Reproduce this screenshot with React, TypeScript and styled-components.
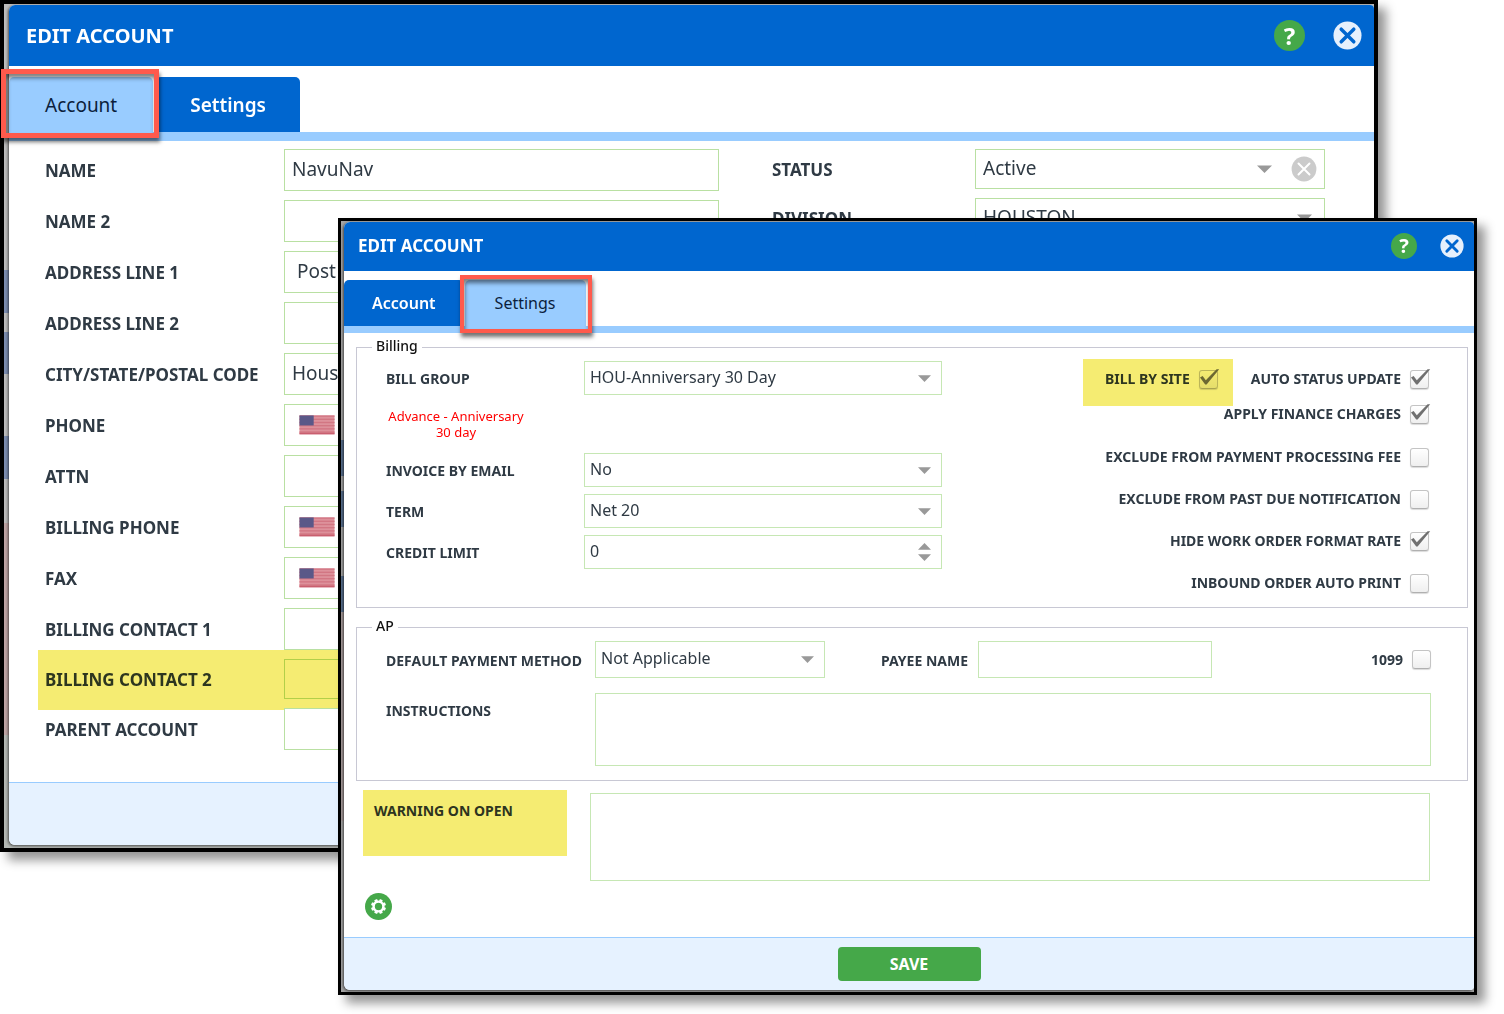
import React, { useState } from "react";
import styled, { createGlobalStyle, css } from "styled-components";

const color = {
  blue: "#0066cf",
  sky: "#99ccff",
  footer: "#e6f2ff",
  green: "#45a849",
  text: "#2f3a44",
  field: "#b9e0a2",
  fieldSoft: "#c6e7b4",
  group: "#c8c8d4",
  marker: "#f5ec72",
  callout: "#ff5a4c",
  grey: "#999999",
};

type Size = "large" | "small";

const GlobalStyle = createGlobalStyle`
  *, *::before, *::after { box-sizing: border-box; }
  body {
    margin: 0;
    background: #fff;
    color: ${color.text};
    font-family: "Noto Sans", "Open Sans", sans-serif;
  }
  button, input, select, textarea { font: inherit; color: inherit; margin: 0; }
`;

/* ---------- windows ---------- */

const Stage = styled.main`
  display: grid;
  align-items: start;
  min-height: 100vh;
  overflow: hidden;
`;

const Frame = styled.section<{ $size: Size }>`
  grid-area: 1 / 1;
  border: 4px solid #000;
  box-shadow: 8px 8px 10px rgba(0, 0, 0, 0.42);
  ${({ $size }) =>
    $size === "large"
      ? css`
          margin-right: 126px;
          padding: 1px 0 3px 5px;
          background: linear-gradient(
            #bdbdbd 266px, #7c8db0 266px 309px, #bdbdbd 309px 328px,
            #7c8db0 328px 370px, #bdbdbd 370px 432px, #7c8db0 432px 475px,
            #bdbdbd 475px 519px, #bfa5a5 519px 731px, #b4b8b4 731px
          );
        `
      : css`
          z-index: 1;
          margin: 218px 27px 0 338px;
          border-width: 3px;
          padding: 1px 0 2px 3px;
          background: linear-gradient(
            #a5a5a5 219px, #5a7290 219px 255px, #a5a5a5 255px 270px,
            #5a7290 270px 306px, #a5a5a5 306px 355px, #5a7290 355px 391px,
            #a89c9c 391px 600px, #a5a5a5 600px
          );
        `}
`;

const Dialog = styled.div`
  border-radius: 6px 4px 4px 6px;
  background: #fff;
  box-shadow: -1px 1px 3px rgba(0, 0, 0, 0.6);
`;

const Header = styled.header<{ $size: Size }>`
  display: flex;
  align-items: center;
  border-radius: 6px 4px 0 0;
  background: ${color.blue};
  color: #fff;
  ${({ $size }) =>
    $size === "large"
      ? css`height: 61px; padding: 0 12px 0 17px; gap: 28px;`
      : css`height: 49px; padding: 0 10px 2px 14px; gap: 23px;`}
`;

const Title = styled.h1<{ $size: Size }>`
  flex: 1;
  margin: 0;
  font-size: ${({ $size }) => ($size === "large" ? 20 : 17)}px;
  line-height: 24px;
  font-weight: 700;
`;

const IconButton = styled.button<{ $d: number }>`
  display: block;
  flex: none;
  width: ${({ $d }) => $d}px;
  height: ${({ $d }) => $d}px;
  padding: 0;
  border: 0;
  background: none;
  cursor: pointer;
  svg { display: block; width: 100%; height: 100%; }
`;

const HelpButton = styled(IconButton)`
  border-radius: 50%;
  background: ${color.green};
  color: #fff;
  font-size: ${({ $d }) => ($d > 28 ? 24 : 20)}px;
  line-height: ${({ $d }) => $d}px;
  font-weight: 700;
  text-align: center;
`;

/* ---------- tabs ---------- */

const TabBar = styled.div<{ $size: Size }>`
  display: flex;
  ${({ $size }) =>
    $size === "large"
      ? css`padding-top: 11px; gap: 3px; border-bottom: 9px solid ${color.sky};`
      : css`padding-top: 9px; gap: 1px; border-bottom: 7px solid ${color.sky};`}
`;

const Tab = styled.button<{ $size: Size; $active: boolean }>`
  border: 0;
  border-radius: 5px 5px 0 0;
  background: ${({ $active }) => ($active ? color.sky : color.blue)};
  color: ${({ $active }) => ($active ? "#0b1e3c" : "#fff")};
  font-weight: ${({ $active }) => ($active ? 400 : 600)};
  cursor: pointer;
  ${({ $size, $active }) =>
    $size === "large"
      ? css`height: 55px; padding: 0 ${$active ? 36 : 34}px; font-size: 19px;`
      : css`height: 46px; padding: 0 ${$active ? 30 : 28}px; font-size: 16px;`}
`;

const Callout = styled.span<{ $size: Size }>`
  position: absolute;
  inset: ${({ $size }) => ($size === "large" ? "-8px -6px -6px -8px" : "-5px -6px -7px -5px")};
  border: ${({ $size }) => ($size === "large" ? 5 : 4)}px solid ${color.callout};
  box-shadow: 1px 4px 4px rgba(0, 0, 0, 0.55), inset 1px 4px 4px rgba(0, 0, 0, 0.5);
  pointer-events: none;
`;

const TabSlot = styled.div`
  position: relative;
  z-index: 1;
`;

/* ---------- fields ---------- */

const marked = css<{ $inset: string }>`
  position: relative;
  &::after {
    content: "";
    position: absolute;
    inset: ${({ $inset }) => $inset};
    background: ${color.marker};
    mix-blend-mode: multiply;
    pointer-events: none;
  }
`;

const boxStyle = css<{ $size: Size }>`
  display: block;
  width: 100%;
  height: 100%;
  border: 1px solid ${({ $size }) => ($size === "large" ? color.field : color.fieldSoft)};
  border-radius: 0;
  outline: 0;
  background: #fff;
  appearance: none;
  padding: ${({ $size }) => ($size === "large" ? "0 7px 3px" : "0 5px 3px")};
  font-size: ${({ $size }) => ($size === "large" ? 19 : 16)}px;
`;

const TextInput = styled.input<{ $size: Size; $icon?: boolean }>`
  ${boxStyle}
  ${({ $icon }) => $icon && css`padding-left: 60px;`}
`;

const NumberInput = styled(TextInput)`
  appearance: textfield;
  &::-webkit-inner-spin-button { appearance: none; margin: 0; }
`;

const Select = styled.select<{ $size: Size }>`
  ${boxStyle}
`;

const TextArea = styled.textarea<{ $size: Size; $h: number }>`
  ${boxStyle}
  height: ${({ $h }) => $h}px;
  resize: none;
`;

const Control = styled.div<{ $h: number }>`
  position: relative;
  height: ${({ $h }) => $h}px;
  min-width: 0;
`;

const Adornment = styled.span<{ $right: number }>`
  position: absolute;
  top: 0;
  bottom: 0;
  right: ${({ $right }) => $right}px;
  display: flex;
  align-items: center;
  gap: 19px;
  pointer-events: none;
`;

const Spinner = styled(Adornment)`
  flex-direction: column;
  justify-content: center;
  gap: 4px;
`;

const LeadIcon = styled.span`
  position: absolute;
  top: 0;
  bottom: 0;
  left: 15px;
  display: flex;
  align-items: center;
`;

const Label = styled.label<{ $size: Size }>`
  font-size: ${({ $size }) => ($size === "large" ? 17 : 14)}px;
  line-height: 20px;
  font-weight: 700;
  white-space: nowrap;
`;

const AccountBody = styled.form`
  display: flex;
  align-items: flex-start;
  gap: 53px;
  padding: 8px 49px 32px 36px;
`;

const FieldColumn = styled.div<{ $fixed?: boolean }>`
  display: grid;
  gap: 9px;
  ${({ $fixed }) => ($fixed ? css`flex: none; width: 553px;` : css`flex: 1; min-width: 0;`)}
`;

const FieldRow = styled.div<{ $label: number }>`
  display: grid;
  grid-template-columns: ${({ $label }) => $label}px minmax(0, 1fr);
  align-items: center;
  > label { padding-top: 2px; }
`;

const MarkedRow = styled(FieldRow)<{ $inset: string }>`
  ${marked}
`;

const Footer = styled.footer<{ $size: Size }>`
  display: flex;
  align-items: center;
  justify-content: center;
  height: ${({ $size }) => ($size === "large" ? 63 : 53)}px;
  border-top: 1px solid ${color.sky};
  border-radius: 0 0 4px 6px;
  background: ${color.footer};
`;

const SaveButton = styled.button`
  width: 143px;
  height: 34px;
  border: 0;
  border-radius: 4px;
  background: ${color.green};
  color: #fff;
  font-size: 16px;
  font-weight: 700;
  cursor: pointer;
`;

/* ---------- settings window ---------- */

const SettingsBody = styled.form`
  padding: 3px 6px 17px 12px;
`;

const Group = styled.fieldset<{ $pad: string }>`
  min-width: 0;
  margin: 0 0 8px;
  padding: ${({ $pad }) => $pad};
  border: 1px solid ${color.group};
`;

const Legend = styled.legend`
  margin-left: -14px;
  padding: 0 4px 2px;
  color: #111;
  font-size: 14px;
  line-height: 20px;
  font-weight: 500;
`;

const BillingGrid = styled.div`
  display: flex;
  justify-content: space-between;
  align-items: flex-start;
`;

const BillingFields = styled.div`
  display: grid;
  gap: 7px;
  width: 556px;
`;

const Note = styled.p`
  display: flex;
  align-items: center;
  width: 140px;
  height: 44px;
  margin: 0;
  color: #f00;
  font-size: 13px;
  line-height: 16px;
  text-align: center;
`;

const Flags = styled.div`
  display: flex;
  flex-direction: column;
  align-items: flex-end;
  gap: 22px;
  padding-top: 8px;
`;

const FlagPair = styled.div`
  display: flex;
  flex-direction: column;
  align-items: flex-end;
  gap: 15px;
  padding-bottom: 1px;
`;

const FlagLine = styled.div`
  display: flex;
  gap: 33px;
`;

const Flag = styled.div`
  display: flex;
  align-items: center;
  gap: 9px;
  height: 20px;
`;

const MarkedFlag = styled(Flag)<{ $inset: string }>`
  ${marked}
`;

const TickWrap = styled.span`
  position: relative;
  display: block;
  width: 19px;
  height: 19px;
  svg {
    position: absolute;
    top: -1px;
    left: 0;
    display: none;
    pointer-events: none;
  }
  input:checked + svg { display: block; }
`;

const TickBox = styled.input`
  display: block;
  appearance: none;
  width: 19px;
  height: 19px;
  border: 1px solid #c4c4c4;
  border-bottom-color: #b0b0b0;
  border-radius: 3px;
  background: linear-gradient(#fff, #efefef);
  box-shadow: 0 1px 1px rgba(0, 0, 0, 0.15);
`;

const PaymentRow = styled.div`
  display: grid;
  grid-template-columns: 439px 331px 1fr;
  column-gap: 56px;
  align-items: center;
`;

const PaymentFlag = styled.div`
  justify-self: end;
`;

const AreaRow = styled.div<{ $label: number }>`
  display: grid;
  grid-template-columns: ${({ $label }) => $label}px minmax(0, 1fr);
  align-items: start;
`;

const InstructionsRow = styled(AreaRow)`
  margin-top: 15px;
  ${Label} { padding-top: 8px; }
`;

const WarningRow = styled(AreaRow)`
  padding: 1px 38px 0 7px;
  textarea { margin-top: 3px; }
`;

const WarningLabel = styled(Label)`
  width: 204px;
  height: 66px;
  padding: 11px;
  background: ${color.marker};
  color: #2d3420;
`;

const Tools = styled.div`
  padding: 12px 9px 0;
`;

/* ---------- drawings ---------- */

const Caret = ({ w = 15, up = false }: { w?: number; up?: boolean }) => (
  <svg width={w} height={w > 13 ? 8 : 7} viewBox="0 0 15 8" preserveAspectRatio="none" aria-hidden="true">
    <path d={up ? "M7.5 0 15 7.6H0z" : "M0 .4h15L7.5 8z"} fill={color.grey} />
  </svg>
);

const CloseIcon = () => (
  <svg viewBox="0 0 30 30" aria-hidden="true">
    <circle cx="15" cy="15" r="14.5" fill="#e6f0fc" />
    <path d="M8.5 8.5l13 13M21.5 8.5l-13 13" stroke={color.blue} strokeWidth="3.6" strokeLinecap="round" />
  </svg>
);

const ClearIcon = () => (
  <svg width="26" height="26" viewBox="0 0 26 26" aria-hidden="true">
    <circle cx="13" cy="13" r="12.4" fill="#cbcbcb" />
    <path d="M7.5 7.5l11 11M18.5 7.5l-11 11" stroke="#fff" strokeWidth="2" strokeLinecap="round" />
  </svg>
);

const Check = () => (
  <svg width="22" height="18" viewBox="0 0 22 18" aria-hidden="true">
    <path d="M1 8.6 3.6 7l3.2 4.2L17.6.2h2.6L7.6 15.6H6.2z" fill="#707070" />
  </svg>
);

const UsFlag = () => (
  <svg width="36" height="20" viewBox="0 0 38 22" preserveAspectRatio="none" aria-hidden="true">
    <rect width="37" height="21" x=".5" y=".5" fill="#dd919b" />
    {[0.5, 4, 7.5, 11, 14.5, 18].map((y) => (
      <rect key={y} x=".5" y={y} width="37" height="1.5" fill="#d27683" />
    ))}
    <rect x=".5" y="19.5" width="37" height="1.5" fill="#c95f6f" />
    <rect x=".5" y=".5" width="15" height="11" fill="#5a5888" />
  </svg>
);

const GearIcon = () => (
  <svg viewBox="0 0 27 27" aria-hidden="true">
    <circle cx="13.5" cy="13.5" r="13.5" fill={color.green} />
    {[22.5, 67.5, 112.5, 157.5, 202.5, 247.5, 292.5, 337.5].map((a) => (
      <rect key={a} x="11.9" y="6" width="3.2" height="3.6" rx=".6" fill="#fff" transform={`rotate(${a} 13.5 13.5)`} />
    ))}
    <circle cx="13.5" cy="13.5" r="4.9" fill="none" stroke="#fff" strokeWidth="2.4" />
  </svg>
);

/* ---------- composed parts ---------- */

const TopBar = ({ size }: { size: Size }) => (
  <Header $size={size}>
    <Title $size={size}>EDIT ACCOUNT</Title>
    <HelpButton type="button" $d={size === "large" ? 31 : 26} aria-label="Help">?</HelpButton>
    <IconButton type="button" $d={size === "large" ? 29 : 24} aria-label="Close"><CloseIcon /></IconButton>
  </Header>
);

const Tabs = ({ size, active }: { size: Size; active: string }) => (
  <TabBar $size={size} role="tablist">
    {["Account", "Settings"].map((name) => {
      const on = name === active;
      const tab = (
        <Tab key={name} type="button" role="tab" aria-selected={on} $size={size} $active={on}>{name}</Tab>
      );
      return on ? <TabSlot key={name}>{tab}<Callout $size={size} /></TabSlot> : tab;
    })}
  </TabBar>
);

const Tick = ({ id, label, on = false, highlight = false }: { id: string; label: string; on?: boolean; highlight?: boolean }) => {
  const [checked, setChecked] = useState(on);
  const inner = (
    <>
      <Label $size="small" htmlFor={id}>{label}</Label>
      <TickWrap>
        <TickBox id={id} type="checkbox" checked={checked} onChange={(e) => setChecked(e.target.checked)} />
        <Check />
      </TickWrap>
    </>
  );
  return highlight ? <MarkedFlag $inset="-10px -15px -17px -22px">{inner}</MarkedFlag> : <Flag>{inner}</Flag>;
};

const Picker = ({ id, value, size, height, clear }: { id: string; value: string; size: Size; height: number; clear?: boolean }) => (
  <Control $h={height}>
    <Select id={id} $size={size} defaultValue={value}>
      <option>{value}</option>
    </Select>
    <Adornment $right={size === "small" ? 11 : clear ? 8 : 13}>
      <Caret w={size === "large" ? 15 : 13} />
      {clear && <ClearIcon />}
    </Adornment>
  </Control>
);

const accountFields: { label: string; value?: string; flag?: boolean; short?: boolean }[] = [
  { label: "NAME", value: "NavuNav" },
  { label: "NAME 2" },
  { label: "ADDRESS LINE 1", value: " Post" },
  { label: "ADDRESS LINE 2" },
  { label: "CITY/STATE/POSTAL CODE", value: "Houston" },
  { label: "PHONE", flag: true },
  { label: "ATTN" },
  { label: "BILLING PHONE", flag: true },
  { label: "FAX", flag: true },
  { label: "BILLING CONTACT 1" },
  { label: "BILLING CONTACT 2", short: true },
  { label: "PARENT ACCOUNT" },
];

const AccountWindow = () => (
  <Frame $size="large">
    <Dialog>
      <TopBar size="large" />
      <Tabs size="large" active="Account" />
      <AccountBody>
        <FieldColumn>
          {accountFields.map(({ label, value, flag, short }, i) => {
            const inner = (
              <>
                <Label $size="large" htmlFor={`acc-${i}`}>{label}</Label>
                <Control $h={short ? 40 : 42}>
                  <TextInput id={`acc-${i}`} $size="large" $icon={flag} defaultValue={value} />
                  {flag && <LeadIcon><UsFlag /></LeadIcon>}
                </Control>
              </>
            );
            return short ? (
              <MarkedRow key={label} $label={239} $inset="-9px 0 -11px -7px">{inner}</MarkedRow>
            ) : (
              <FieldRow key={label} $label={239}>{inner}</FieldRow>
            );
          })}
        </FieldColumn>
        <FieldColumn $fixed>
          <FieldRow $label={203}>
            <Label $size="large" htmlFor="status">STATUS</Label>
            <Picker id="status" value="Active" size="large" height={40} clear />
          </FieldRow>
          <FieldRow $label={203}>
            <Label $size="large" htmlFor="division">DIVISION</Label>
            <Picker id="division" value="HOUSTON" size="large" height={40} />
          </FieldRow>
        </FieldColumn>
      </AccountBody>
      <Footer $size="large" />
    </Dialog>
  </Frame>
);

const SettingsWindow = () => (
  <Frame $size="small">
    <Dialog>
      <TopBar size="small" />
      <Tabs size="small" active="Settings" />
      <SettingsBody>
        <Group $pad="3px 38px 14px 29px">
          <Legend>Billing</Legend>
          <BillingGrid>
            <BillingFields>
              <FieldRow $label={198}>
                <Label $size="small" htmlFor="bill-group">BILL GROUP</Label>
                <Picker id="bill-group" value="HOU-Anniversary 30 Day" size="small" height={34} />
              </FieldRow>
              <Note>Advance - Anniversary 30 day</Note>
              <FieldRow $label={198}>
                <Label $size="small" htmlFor="invoice">INVOICE BY EMAIL</Label>
                <Picker id="invoice" value="No" size="small" height={34} />
              </FieldRow>
              <FieldRow $label={198}>
                <Label $size="small" htmlFor="term">TERM</Label>
                <Picker id="term" value="Net 20" size="small" height={34} />
              </FieldRow>
              <FieldRow $label={198}>
                <Label $size="small" htmlFor="credit">CREDIT LIMIT</Label>
                <Control $h={34}>
                  <NumberInput id="credit" type="number" $size="small" defaultValue={0} />
                  <Spinner $right={11}><Caret w={13} up /><Caret w={13} /></Spinner>
                </Control>
              </FieldRow>
            </BillingFields>
            <Flags>
              <FlagPair>
                <FlagLine>
                  <Tick id="bill-by-site" label="BILL BY SITE" on highlight />
                  <Tick id="auto-status" label="AUTO STATUS UPDATE" on />
                </FlagLine>
                <Tick id="finance" label="APPLY FINANCE CHARGES" on />
              </FlagPair>
              <Tick id="fee" label="EXCLUDE FROM PAYMENT PROCESSING FEE" />
              <Tick id="past-due" label="EXCLUDE FROM PAST DUE NOTIFICATION" />
              <Tick id="hide-rate" label="HIDE WORK ORDER FORMAT RATE" on />
              <Tick id="auto-print" label="INBOUND ORDER AUTO PRINT" />
            </Flags>
          </BillingGrid>
        </Group>
        <Group $pad="3px 36px 14px 29px">
          <Legend>AP</Legend>
          <PaymentRow>
            <FieldRow $label={209}>
              <Label $size="small" htmlFor="method">DEFAULT PAYMENT METHOD</Label>
              <Picker id="method" value="Not Applicable" size="small" height={37} />
            </FieldRow>
            <FieldRow $label={97}>
              <Label $size="small" htmlFor="payee">PAYEE NAME</Label>
              <Control $h={37}><TextInput id="payee" $size="small" /></Control>
            </FieldRow>
            <PaymentFlag><Tick id="form-1099" label="1099" /></PaymentFlag>
          </PaymentRow>
          <InstructionsRow $label={209}>
            <Label $size="small" htmlFor="instructions">INSTRUCTIONS</Label>
            <TextArea id="instructions" $size="small" $h={73} />
          </InstructionsRow>
        </Group>
        <WarningRow $label={227}>
          <WarningLabel $size="small" htmlFor="warning">WARNING ON OPEN</WarningLabel>
          <TextArea id="warning" $size="small" $h={88} />
        </WarningRow>
        <Tools>
          <IconButton type="button" $d={27} aria-label="Options"><GearIcon /></IconButton>
        </Tools>
      </SettingsBody>
      <Footer $size="small">
        <SaveButton type="button">SAVE</SaveButton>
      </Footer>
    </Dialog>
  </Frame>
);

export default function App() {
  return (
    <>
      <GlobalStyle />
      <Stage>
        <AccountWindow />
        <SettingsWindow />
      </Stage>
    </>
  );
}
